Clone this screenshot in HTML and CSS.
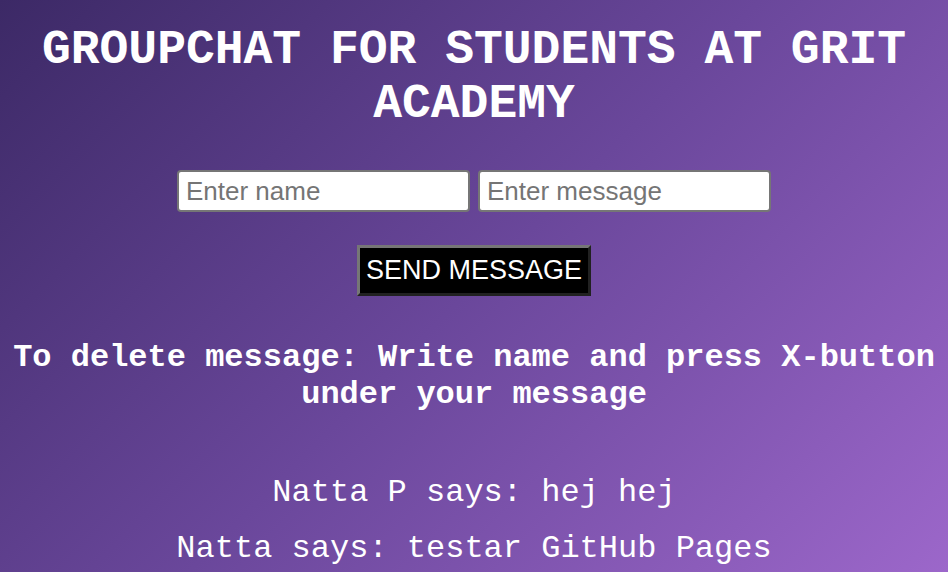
FILE: index.html
```html
<!DOCTYPE html>
<html lang="en">
<head>
<meta charset="utf-8">
<title>Groupchat</title>
<link rel="stylesheet" href="styles.css">
</head>
<body>
<main class="page">
  <h1 class="title">GROUPCHAT FOR STUDENTS AT GRIT ACADEMY</h1>
  <form class="chat-form">
    <div class="fields">
      <input class="field" type="text" placeholder="Enter name">
      <input class="field" type="text" placeholder="Enter message">
    </div>
    <button class="send" type="button">SEND MESSAGE</button>
  </form>
  <h2 class="hint">To delete message: Write name and press X-button under your message</h2>
  <div class="messages">
    <p class="message">Natta P says: hej hej</p>
    <p class="message">Natta says: testar GitHub Pages</p>
  </div>
</main>
</body>
</html>
```

FILE: styles.css
```css
html, body {
  margin: 0;
  padding: 0;
  height: 100%;
}
body {
  background: linear-gradient(135deg, #3c2966 0%, #6a479b 50%, #9c67ca 100%);
  color: #fff;
  font-family: "Courier New", "Nimbus Mono PS", "FreeMono", "Liberation Mono", monospace;
  overflow: hidden;
}
.page {
  display: flex;
  flex-direction: column;
  align-items: center;
  text-align: center;
  padding: 23px 8px 0;
}
.title {
  margin: 0;
  font-size: 48px;
  line-height: 54px;
  font-weight: bold;
}
.chat-form {
  display: flex;
  flex-direction: column;
  align-items: center;
  margin-top: 39px;
}
.fields {
  display: flex;
  gap: 8px;
}
.field {
  box-sizing: border-box;
  width: 293px;
  height: 42px;
  border: 2px solid #767676;
  border-radius: 4px;
  padding: 0 7px;
  font-family: "Liberation Sans", Arial, sans-serif;
  font-size: 26px;
  color: #000;
  background: #fff;
}
.field::placeholder {
  color: #757575;
}
.send {
  box-sizing: border-box;
  margin-top: 33px;
  width: 234px;
  height: 51px;
  background: #000;
  color: #fff;
  border: 3px outset #767676;
  font-family: "Liberation Sans", Arial, sans-serif;
  font-size: 27px;
  padding: 0;
}
.hint {
  margin: 43px 0 0;
  font-size: 32px;
  line-height: 37px;
  font-weight: bold;
}
.messages {
  margin-top: 62px;
  display: flex;
  flex-direction: column;
  gap: 20px;
}
.message {
  margin: 0;
  font-size: 32px;
  line-height: 36px;
}
```
